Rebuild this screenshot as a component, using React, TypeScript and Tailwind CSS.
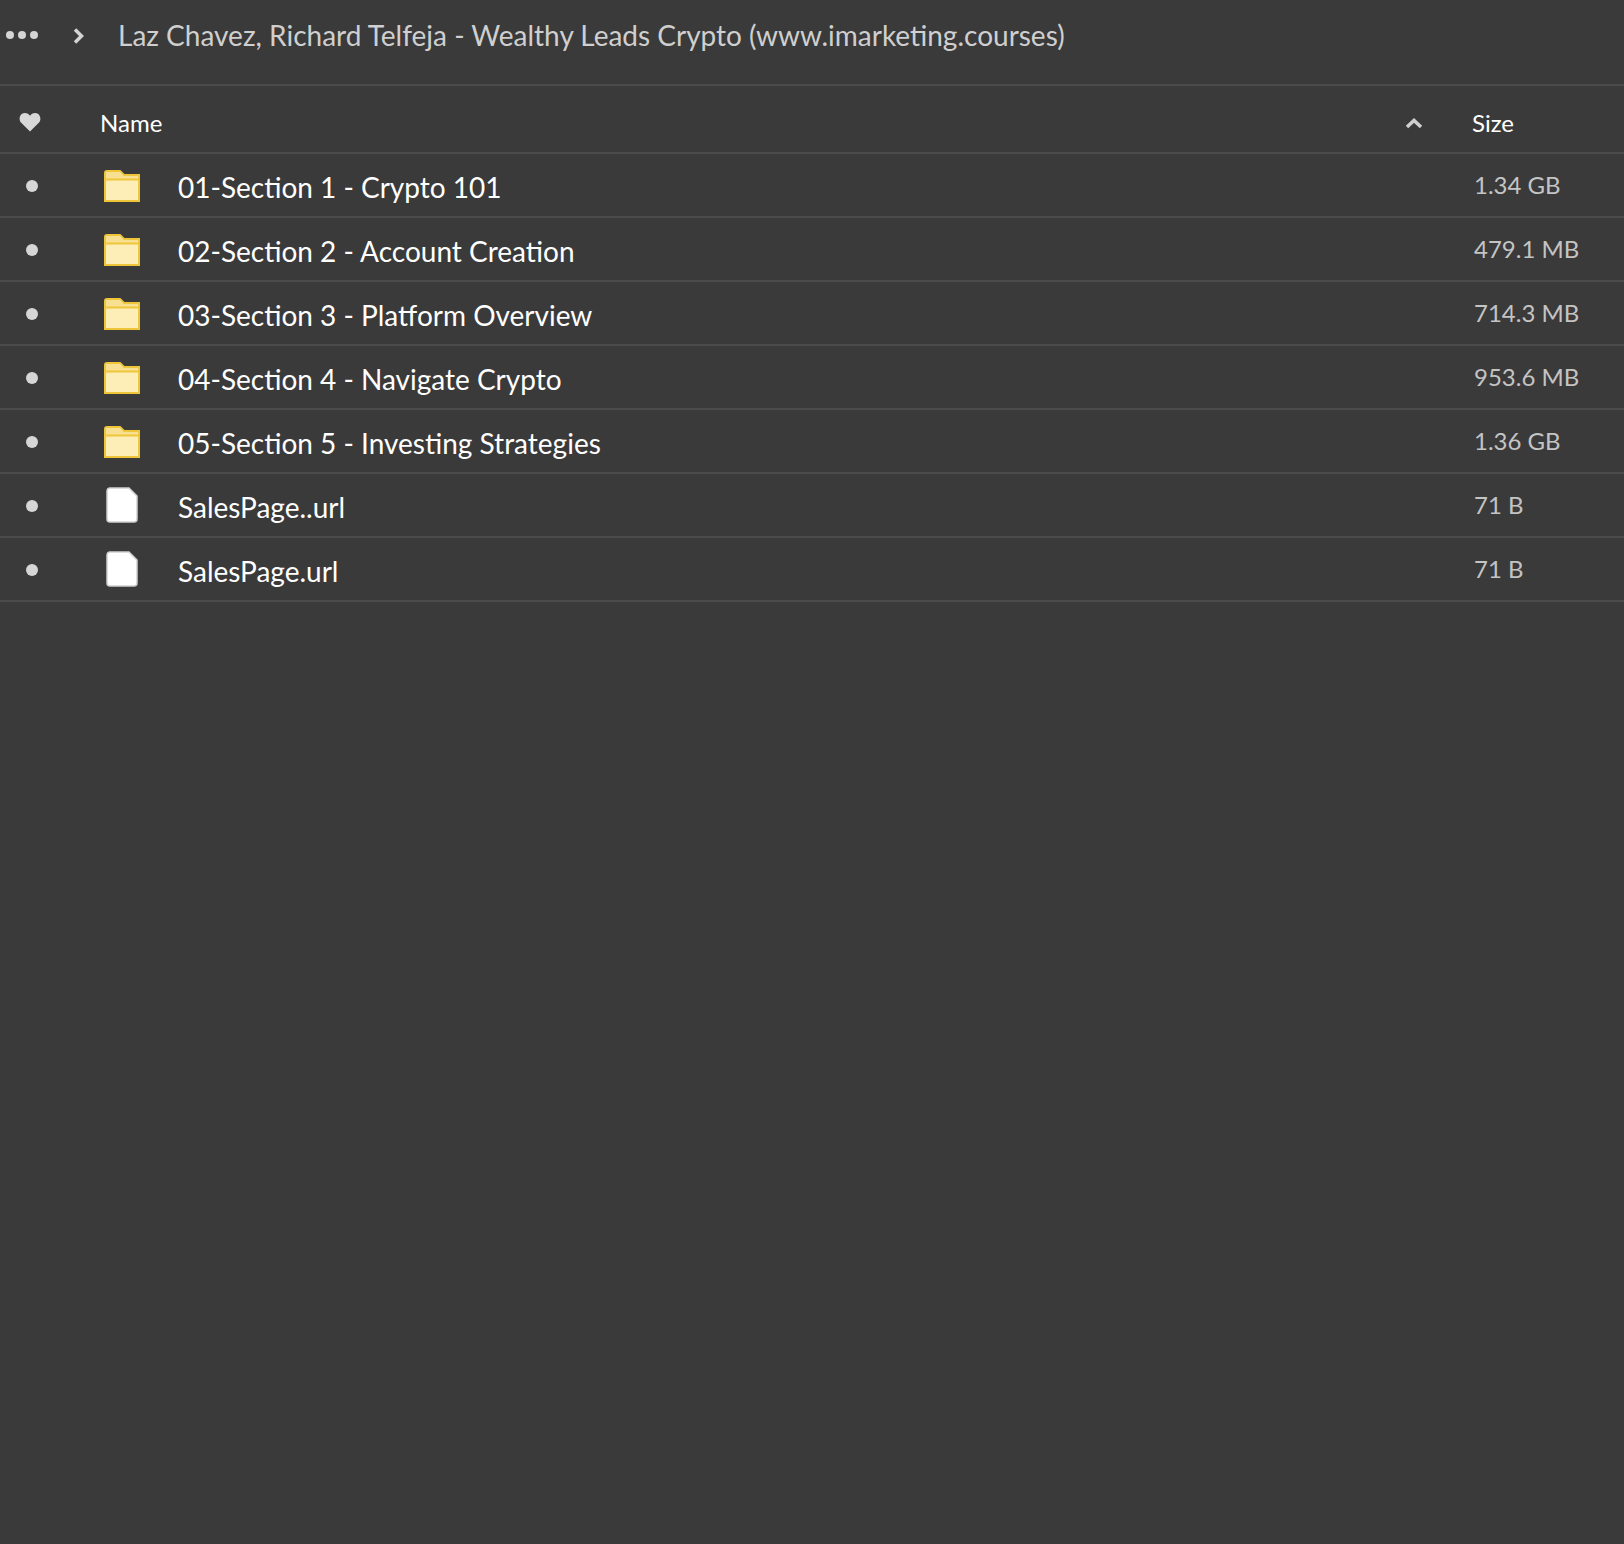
const rows = [
  { name: "01-Section 1 - Crypto 101", size: "1.34 GB", folder: true },
  { name: "02-Section 2 - Account Creation", size: "479.1 MB", folder: true },
  { name: "03-Section 3 - Platform Overview", size: "714.3 MB", folder: true },
  { name: "04-Section 4 - Navigate Crypto", size: "953.6 MB", folder: true },
  { name: "05-Section 5 - Investing Strategies", size: "1.36 GB", folder: true },
  { name: "SalesPage..url", size: "71 B", folder: false },
  { name: "SalesPage.url", size: "71 B", folder: false },
];

function Folder() {
  return (
    <svg width="36" height="32" viewBox="0 0 36 32" className="mt-[2px]">
      <path d="M1 3a2 2 0 0 1 2-2h13l4 4h15v26H1z" fill="#fdeeb8" stroke="#efc53a" strokeWidth="2" />
      <path d="M2 2h14l3.500 4H34v3H2z" fill="#f8e093" />
      <path d="M1 9.500h34" stroke="#efc53a" strokeWidth="2" />
    </svg>
  );
}

function FileIcon() {
  return (
    <svg width="32" height="36" viewBox="0 0 32 36">
      <path d="M4 1h19l8 8v23a3 3 0 0 1-3 3H4a3 3 0 0 1-3-3V4a3 3 0 0 1 3-3z" fill="#ffffff" stroke="#d0d0d0" strokeWidth="1.500" />
    </svg>
  );
}

export default function App() {
  return (
    <div className="w-[1624px] h-[1544px] bg-[#3a3a3a] overflow-hidden font-['Lato','Liberation_Sans',sans-serif]">
      <div className="h-[86px] border-b-2 border-[#4b4b4b] flex items-start pt-[16px]">
        <div className="w-[39px] pl-[6px] h-[38px] flex items-center gap-[4px] shrink-0">
          <span className="w-[8px] h-[8px] rounded-full bg-[#d4d4d4]" />
          <span className="w-[8px] h-[8px] rounded-full bg-[#d4d4d4]" />
          <span className="w-[8px] h-[8px] rounded-full bg-[#d4d4d4]" />
        </div>
        <div className="w-[79px] h-[38px] flex items-center pl-[34px] pt-[2px]">
          <svg width="12" height="18" viewBox="0 0 12 18">
            <path d="M2 2.500 8.500 9 2 15.500" fill="none" stroke="#d4d4d4" strokeWidth="3.500" />
          </svg>
        </div>
        <span className="text-[28px] leading-[38px] text-[#cfcfcf] whitespace-nowrap">
          Laz Chavez, Richard Telfeja - Wealthy Leads Crypto (www.imarketing.courses)
        </span>
      </div>
      <div className="h-[68px] border-b-2 border-[#4b4b4b] flex items-center pt-[8px]">
        <div className="w-[100px] pl-[19px] flex items-center pb-[2px]">
          <svg width="22" height="20" viewBox="0 0 23 21">
            <path d="M11.500 20.500 2 11C-1 7.500 1 1 6 1c2.500 0 4.500 1.300 5.500 3 1-1.700 3-3 5.500-3 5 0 7 6.500 4 10z" fill="#d8d8d8" />
          </svg>
        </div>
        <span className="flex-1 text-[24px] text-white">Name</span>
        <div className="w-[75px] flex items-center pl-[8px]">
          <svg width="18" height="12" viewBox="0 0 18 12">
            <path d="M2 10 9 3.500l7 6.500" fill="none" stroke="#cfcfcf" strokeWidth="3.500" />
          </svg>
        </div>
        <span className="w-[152px] text-[24px] text-white">Size</span>
      </div>
      {rows.map((r) => (
        <div key={r.name} className="h-[64px] border-b-2 border-[#4b4b4b] flex items-center">
          <div className="w-[85px] pl-[26px] pt-[2px] flex items-center">
            <span className="w-[12px] h-[12px] rounded-full bg-[#d6d6d6]" />
          </div>
          <div className="w-[74px] mr-[19px] flex justify-center items-center">
            {r.folder ? <Folder /> : <FileIcon />}
          </div>
          <span className="flex-1 text-[28px] text-white pt-[3px] whitespace-nowrap">{r.name}</span>
          <span className="w-[150px] text-[24px] text-[#c4c4c4] whitespace-nowrap">{r.size}</span>
        </div>
      ))}
    </div>
  );
}
